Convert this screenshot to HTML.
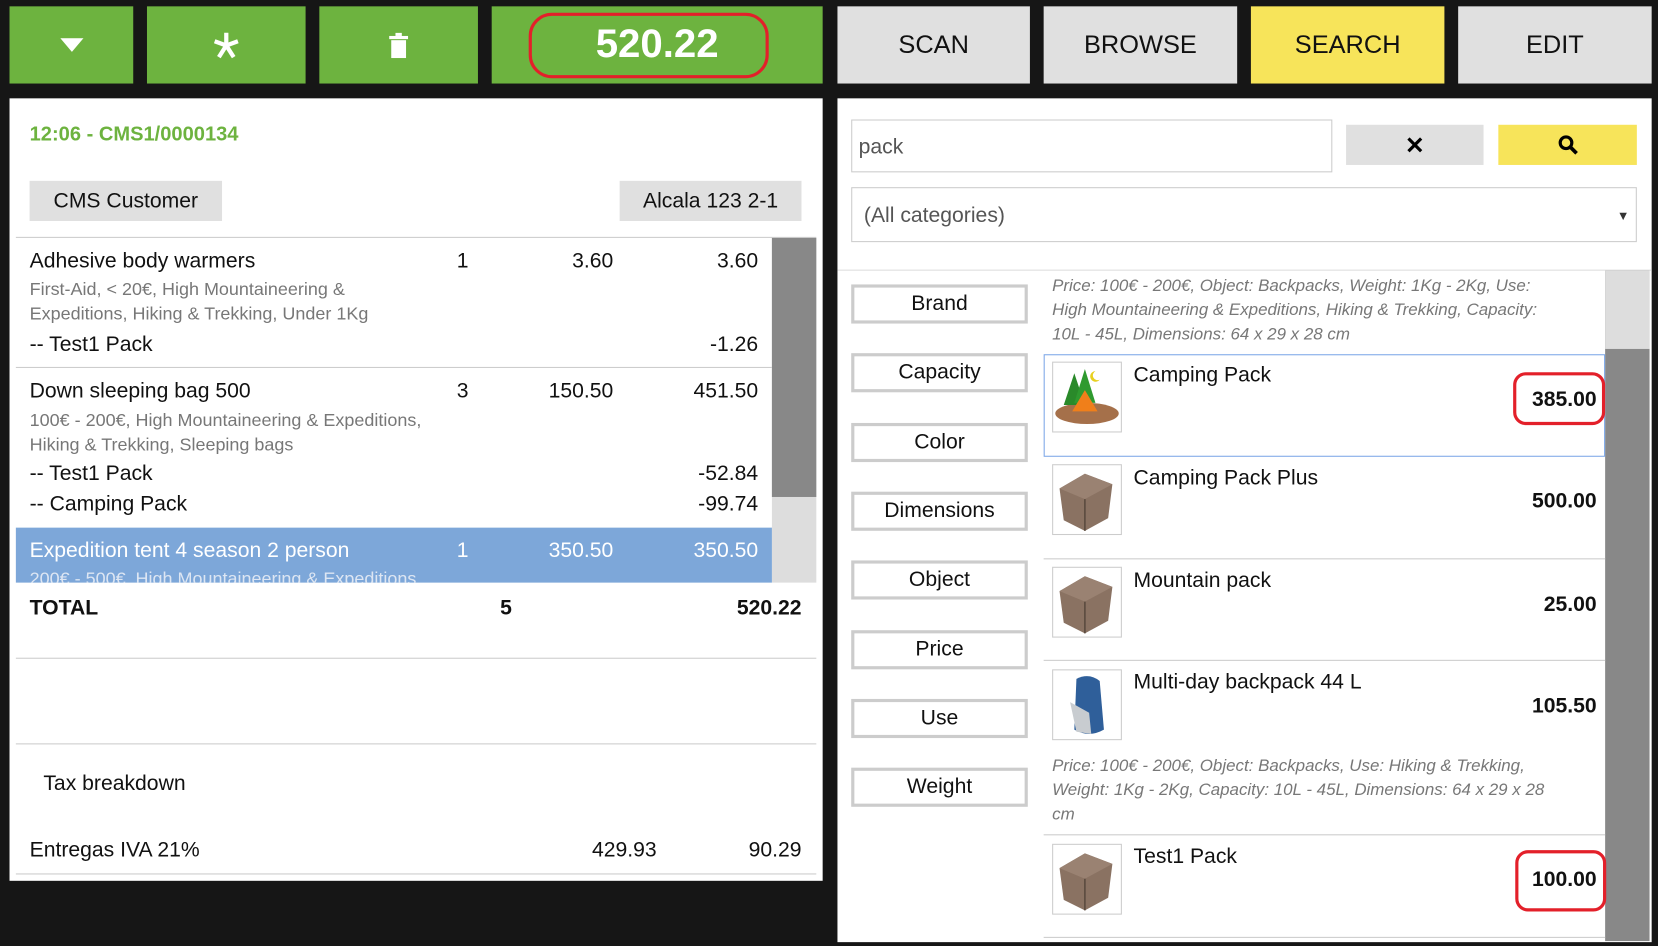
<!DOCTYPE html>
<html><head><meta charset="utf-8"><style>
html,body{margin:0;padding:0;background:#161616;width:1658px;height:946px;overflow:hidden}
#w{position:absolute;left:0;top:0;width:1568px;height:895px;transform:scale(1.05740);transform-origin:0 0;font-family:"Liberation Sans",sans-serif;color:#111}
.a{position:absolute}
.g{background:#6db33f}
.btn{position:absolute;top:6px;height:73px;display:flex;align-items:center;justify-content:center;font-size:24px}
.gr{background:#e0e0e0}
.t{position:absolute;white-space:nowrap}
.r{text-align:right}
.sub{color:#777;font-size:17px;line-height:23px}
.f{position:absolute;left:805px;width:161px;height:31px;border:3px solid #ccc;font-size:20px;text-align:center;line-height:31px;background:#fff}
.img{position:absolute;left:995px;width:64px;height:65px;border:1px solid #ccc;background:#fff}
.nm{position:absolute;left:1072px;font-size:20px}
.pr{position:absolute;right:58px;font-size:20px;font-weight:bold}
.hl{position:absolute;left:987px;width:531px;height:1px;background:#ccc}
.ov{position:absolute;border:3px solid #e3202a;border-radius:12px}
.desc{position:absolute;left:995px;color:#777;font-style:italic;font-size:16px;line-height:23px}
</style></head><body><div id="w">
<div class="btn g" style="left:9px;width:117px"><svg width="22" height="14"><path d="M0 0H22L11 13Z" fill="#fff"/></svg></div>
<div class="btn g" style="left:139px;width:150px"><svg width="26" height="26"><g stroke="#fff" stroke-width="4" stroke-linecap="butt"><path d="M13 1V13"/><path d="M13 13L2 9"/><path d="M13 13L24 9"/><path d="M13 13L6 24"/><path d="M13 13L20 24"/></g></svg></div>
<div class="btn g" style="left:302px;width:150px"><svg width="18" height="24"><rect x="6" y="0" width="6" height="3" fill="#fff"/><rect x="0" y="3" width="18" height="3" fill="#fff"/><rect x="2" y="7" width="14" height="17" fill="#fff"/></svg></div>
<div class="btn g" style="left:465px;width:313px;color:#fff;font-size:38px;font-weight:bold">520.22</div>
<div class="ov" style="left:500px;top:12px;width:221px;height:56px;border-radius:22px"></div>
<div class="btn gr" style="left:792px;width:182px">SCAN</div>
<div class="btn gr" style="left:987px;width:183px">BROWSE</div>
<div class="btn" style="left:1183px;width:183px;background:#f7e45a">SEARCH</div>
<div class="btn gr" style="left:1379px;width:183px">EDIT</div>

<div class="a" style="left:9px;top:93px;width:769px;height:740px;background:#fff"></div>
<div class="t" style="left:28px;top:117px;color:#6db33f;font-weight:bold;font-size:19px">12:06 - CMS1/0000134</div>
<div class="a gr" style="left:28px;top:171px;width:182px;height:38px;font-size:20px;line-height:38px;text-align:center">CMS Customer</div>
<div class="a gr" style="left:586px;top:171px;width:172px;height:38px;font-size:20px;line-height:38px;text-align:center">Alcala 123 2-1</div>
<div class="a" style="left:15px;top:224px;width:757px;height:1px;background:#ccc"></div>
<div class="a" style="left:730px;top:225px;width:42px;height:326px;background:#ddd"></div>
<div class="a" style="left:730px;top:225px;width:42px;height:245px;background:#888"></div>
<div class="t" style="left:28px;top:236px;font-size:20px">Adhesive body warmers</div>
<div class="t" style="left:432px;top:236px;font-size:20px">1</div>
<div class="t r" style="left:480px;width:100px;top:236px;font-size:20px">3.60</div>
<div class="t r" style="left:617px;width:100px;top:236px;font-size:20px">3.60</div>
<div class="t sub" style="left:28px;top:262px">First-Aid, &lt; 20€, High Mountaineering &amp;<br>Expeditions, Hiking &amp; Trekking, Under 1Kg</div>
<div class="t" style="left:28px;top:315px;font-size:20px">-- Test1 Pack</div>
<div class="t r" style="left:617px;width:100px;top:315px;font-size:20px">-1.26</div>
<div class="a" style="left:15px;top:347px;width:715px;height:1px;background:#ccc"></div>
<div class="t" style="left:28px;top:359px;font-size:20px">Down sleeping bag 500</div>
<div class="t" style="left:432px;top:359px;font-size:20px">3</div>
<div class="t r" style="left:480px;width:100px;top:359px;font-size:20px">150.50</div>
<div class="t r" style="left:617px;width:100px;top:359px;font-size:20px">451.50</div>
<div class="t sub" style="left:28px;top:386px">100€ - 200€, High Mountaineering &amp; Expeditions,<br>Hiking &amp; Trekking, Sleeping bags</div>
<div class="t" style="left:28px;top:437px;font-size:20px">-- Test1 Pack</div>
<div class="t r" style="left:617px;width:100px;top:437px;font-size:20px">-52.84</div>
<div class="t" style="left:28px;top:466px;font-size:20px">-- Camping Pack</div>
<div class="t r" style="left:617px;width:100px;top:466px;font-size:20px">-99.74</div>
<div class="a" style="left:15px;top:499px;width:715px;height:52px;background:#7da7d9;overflow:hidden;color:#fff">
<div class="t" style="left:13px;top:11px;font-size:20px">Expedition tent 4 season 2 person</div>
<div class="t" style="left:417px;top:11px;font-size:20px">1</div>
<div class="t r" style="left:465px;width:100px;top:11px;font-size:20px">350.50</div>
<div class="t r" style="left:602px;width:100px;top:11px;font-size:20px">350.50</div>
<div class="t" style="left:13px;top:39px;font-size:17px;color:#dde6f3">200€ - 500€, High Mountaineering &amp; Expeditions</div>
</div>
<div class="t" style="left:28px;top:564px;font-size:20px;font-weight:bold">TOTAL</div>
<div class="t" style="left:473px;top:564px;font-size:20px;font-weight:bold">5</div>
<div class="t r" style="left:658px;width:100px;top:564px;font-size:20px;font-weight:bold">520.22</div>
<div class="a" style="left:15px;top:622px;width:757px;height:1px;background:#ccc"></div>
<div class="a" style="left:15px;top:703px;width:757px;height:1px;background:#ccc"></div>
<div class="t" style="left:41px;top:730px;font-size:20px">Tax breakdown</div>
<div class="t" style="left:28px;top:793px;font-size:20px">Entregas IVA 21%</div>
<div class="t r" style="left:521px;width:100px;top:793px;font-size:20px">429.93</div>
<div class="t r" style="left:658px;width:100px;top:793px;font-size:20px">90.29</div>
<div class="a" style="left:15px;top:826px;width:757px;height:1px;background:#ccc"></div>

<div class="a" style="left:792px;top:93px;width:770px;height:798px;background:#fff"></div>
<div class="a" style="left:805px;top:113px;height:50px;border:1px solid #ccc;font-size:20px;color:#555;line-height:50px;padding-left:6px;box-sizing:border-box;width:455px">pack</div>
<div class="a gr" style="left:1273px;top:118px;width:130px;height:38px;display:flex;align-items:center;justify-content:center"><svg width="16" height="16"><path d="M2 2L14 14M14 2L2 14" stroke="#000" stroke-width="3"/></svg></div>
<div class="a" style="left:1417px;top:118px;width:131px;height:38px;background:#f7e45a;display:flex;align-items:center;justify-content:center"><svg width="20" height="20"><circle cx="8" cy="8" r="5.5" stroke="#000" stroke-width="3" fill="none"/><path d="M12 12L18 18" stroke="#000" stroke-width="3.5"/></svg></div>
<div class="a" style="left:805px;top:177px;width:743px;height:52px;border:1px solid #ccc;box-sizing:border-box;font-size:20px;color:#555;line-height:52px;padding-left:11px">(All categories)<span style="position:absolute;right:6px;font-size:12px;color:#333">▼</span></div>
<div class="a" style="left:792px;top:255px;width:770px;height:1px;background:#ddd"></div>
<div class="f" style="top:269px">Brand</div>
<div class="f" style="top:334px">Capacity</div>
<div class="f" style="top:400px">Color</div>
<div class="f" style="top:465px">Dimensions</div>
<div class="f" style="top:530px">Object</div>
<div class="f" style="top:596px">Price</div>
<div class="f" style="top:661px">Use</div>
<div class="f" style="top:726px">Weight</div>
<div class="a" style="left:1518px;top:256px;width:42px;height:634px;background:#888"></div>
<div class="a" style="left:1518px;top:256px;width:42px;height:74px;background:#ddd"></div>
<div class="desc" style="top:259px;width:500px">Price: 100€ - 200€, Object: Backpacks, Weight: 1Kg - 2Kg, Use:<br>High Mountaineering &amp; Expeditions, Hiking &amp; Trekking, Capacity:<br>10L - 45L, Dimensions: 64 x 29 x 28 cm</div>
<div class="a" style="left:987px;top:335px;width:529px;height:95px;border:1px solid #7da7e8"></div>
<div class="img" style="top:342px"><svg width="64" height="65"><ellipse cx="32" cy="48" rx="30" ry="10" fill="#a5704a"/><path d="M20 10L10 40H30Z" fill="#2a8a2a"/><path d="M30 6L20 38H40Z" fill="#2f9a2f"/><path d="M18 46L30 26L42 46Z" fill="#f07f1a"/><path d="M40 8a5 5 0 1 0 4 8a4 4 0 0 1-4-8z" fill="#e8d020"/></svg></div>
<div class="nm" style="top:344px">Camping Pack</div>
<div class="pr" style="top:367px">385.00</div>
<div class="ov" style="left:1431px;top:352px;width:81px;height:44px"></div>
<div class="hl" style="top:528px"></div>
<div class="img" style="top:439px"><svg width="64" height="65"><path d="M6 22L30 8L56 18L52 50L30 62L10 52Z" fill="#8a7262"/><path d="M6 22L30 32L56 18L30 8Z" fill="#9a8272"/><path d="M30 32V62" stroke="#5a4a3e" stroke-width="1.5"/></svg></div>
<div class="nm" style="top:441px">Camping Pack Plus</div>
<div class="pr" style="top:463px">500.00</div>
<div class="hl" style="top:624px"></div>
<div class="img" style="top:536px"><svg width="64" height="65"><path d="M6 22L30 8L56 18L52 50L30 62L10 52Z" fill="#8a7262"/><path d="M6 22L30 32L56 18L30 8Z" fill="#9a8272"/><path d="M30 32V62" stroke="#5a4a3e" stroke-width="1.5"/></svg></div>
<div class="nm" style="top:538px">Mountain pack</div>
<div class="pr" style="top:561px">25.00</div>
<div class="img" style="top:633px"><svg width="64" height="65"><path d="M22 8Q34 2 44 10L48 56Q34 64 20 56Z" fill="#2f5f9a"/><path d="M16 30L22 58L36 60L34 40Z" fill="#c8ccd0"/></svg></div>
<div class="nm" style="top:634px">Multi-day backpack 44 L</div>
<div class="pr" style="top:657px">105.50</div>
<div class="desc" style="top:713px;width:510px">Price: 100€ - 200€, Object: Backpacks, Use: Hiking &amp; Trekking,<br>Weight: 1Kg - 2Kg, Capacity: 10L - 45L, Dimensions: 64 x 29 x 28<br>cm</div>
<div class="hl" style="top:789px"></div>
<div class="img" style="top:798px"><svg width="64" height="65"><path d="M6 22L30 8L56 18L52 50L30 62L10 52Z" fill="#8a7262"/><path d="M6 22L30 32L56 18L30 8Z" fill="#9a8272"/><path d="M30 32V62" stroke="#5a4a3e" stroke-width="1.5"/></svg></div>
<div class="nm" style="top:799px">Test1 Pack</div>
<div class="pr" style="top:821px">100.00</div>
<div class="ov" style="left:1433px;top:804px;width:80px;height:52px"></div>
<div class="hl" style="top:886px"></div>
</div></body></html>
